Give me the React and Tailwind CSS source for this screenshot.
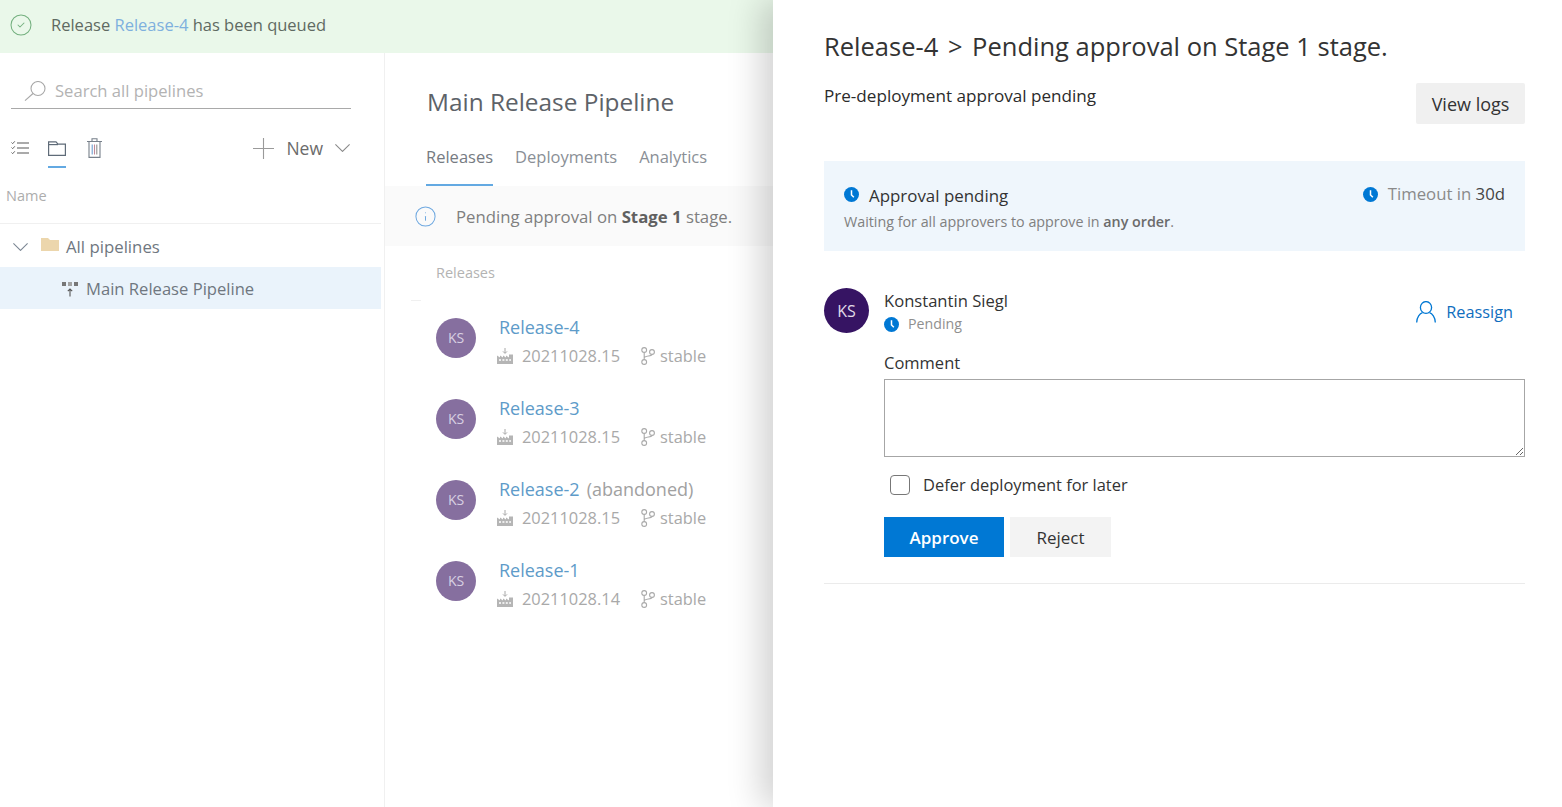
import { CircleCheck, Info } from "lucide-react";

const releases = [
  { name: "Release-4", build: "20211028.15" },
  { name: "Release-3", build: "20211028.15" },
  { name: "Release-2", build: "20211028.15", note: "(abandoned)" },
  { name: "Release-1", build: "20211028.14" },
];

const ClockIcon = ({ className }) => (
  <svg viewBox="0 0 16 16" className={className}>
    <circle cx="8" cy="8" r="8" fill="#0078d4" />
    <path d="M8 3.5V8.5L10.5 11" fill="none" stroke="#fff" strokeWidth="1.6" />
  </svg>
);

const Chevron = ({ color }) => (
  <svg viewBox="0 0 15 8" className="w-[15px] h-[8px] shrink-0" fill="none" stroke={color} strokeWidth="1.1">
    <path d="M0.4 0.4L7.5 7.4L14.6 0.4" />
  </svg>
);

const SearchIcon = () => (
  <svg viewBox="0 0 22 20" className="w-[22px] h-[20px] shrink-0" fill="none" stroke="#a8a8a8" strokeWidth="1.1">
    <circle cx="14" cy="7.5" r="7" />
    <path d="M9 12.5L1 19.6" />
  </svg>
);

const PlusIcon = () => (
  <svg viewBox="0 0 21 21" className="w-[21px] h-[21px] shrink-0" stroke="#9a9a9a" strokeWidth="1.1">
    <path d="M0 10.5H21M10.5 0V21" />
  </svg>
);

const ListIcon = () => (
  <svg viewBox="0 0 18 14" className="w-[18px] h-[14px]" fill="none" stroke="#8f8f8f">
    <path d="M6 2H18M6 7H18M6 12H18" strokeWidth="1.3" />
    <path d="M0.5 1.5L1.7 2.7L3.8 0.3M0.5 6.5L1.7 7.7L3.8 5.3M0.5 11.5L1.7 12.7L3.8 10.3" strokeWidth="1" stroke="#666" />
  </svg>
);

const FolderIcon = () => (
  <svg viewBox="0 0 18 15" className="w-[18px] h-[15px]" fill="none" stroke="#5f6b78" strokeWidth="1.2">
    <path d="M0.6 14.4V0.9H8L10 3.2H17.4V14.4Z" />
    <path d="M0.6 3.6H10" />
  </svg>
);

const TrashIcon = () => (
  <svg viewBox="0 0 15 20" className="w-[15px] h-[20px]" fill="none" stroke="#77808a" strokeWidth="1.1">
    <path d="M0 3.5H15M2 3.5V19.4H13V3.5M5 3.5V0.8H10V3.5" />
    <path d="M5.2 6.5V16.5" stroke="#6f9fd0" />
    <path d="M7.5 6.5V16.5" stroke="#c08a9a" />
    <path d="M9.8 6.5V16.5" stroke="#8f8f8f" />
  </svg>
);

const PipelineIcon = () => (
  <svg viewBox="0 0 16 15" className="w-4 h-[15px]">
    <rect x="0" y="0" width="4" height="4" fill="#777" />
    <rect x="6" y="0" width="4" height="4" fill="#a3a3a3" />
    <rect x="12" y="0" width="4" height="4" fill="#777" />
    <path d="M8 14.5V7M5.8 9.2L8 7L10.2 9.2" fill="none" stroke="#555" strokeWidth="1.1" />
  </svg>
);

const BuildIcon = () => (
  <svg viewBox="0 0 16 16" className="w-4 h-4 shrink-0 -ml-[2px]">
    <path d="M8 0V5M6 3.4L8 5.4L10 3.4" fill="none" stroke="#a8a8a8" strokeWidth="1" />
    <path d="M0 16V7.5L3 9.5V7.5L6 9.5V7.5L9 9.5V7.5L12 9.5V6.5H16V16Z" fill="#b5b5b5" />
    <path d="M2 12H14" stroke="#fff" strokeWidth="1.4" strokeDasharray="2 1.4" />
  </svg>
);

const BranchIcon = () => (
  <svg viewBox="0 0 14 18" className="w-[14px] h-[18px] shrink-0" fill="none" stroke="#a9a9a9" strokeWidth="1.1">
    <circle cx="3.2" cy="3" r="2.4" />
    <circle cx="3.2" cy="15" r="2.4" />
    <circle cx="11" cy="5" r="2.4" />
    <path d="M3.2 5.4V12.6M3.2 11C3.2 8.5 11 9.5 11 7.4" />
  </svg>
);

const UserIcon = () => (
  <svg viewBox="0 0 20 22" className="w-[20px] h-[22px] shrink-0" fill="none" stroke="#0078d4" strokeWidth="1.3">
    <ellipse cx="10" cy="6.5" rx="5.6" ry="5.9" />
    <path d="M0.7 21.5C0.7 16 4 12.5 6.5 11.6M19.3 21.5C19.3 16 16 12.5 13.5 11.6" />
  </svg>
);

const Avatar = () => (
  <div className="w-10 h-10 pb-[2px] rounded-full bg-[#866f9f] flex items-center justify-center text-[#d8cfe2] text-[14px] font-medium shrink-0">
    KS
  </div>
);

const ReleaseRow = ({ release }) => (
  <div className="flex gap-[23px] h-[81px]">
    <Avatar />
    <div className="-mt-[4px]">
      <div className="h-[28px] pb-[2px] flex items-center text-[18px] font-medium text-[#5e9bc9]">
        {release.name}
        {release.note && <span className="ml-[7px] font-normal text-[#a1a1a1]">{release.note}</span>}
      </div>
      <div className="h-[28px] flex items-center text-[16.4px] text-[#a9a9a9]">
        <BuildIcon />
        <span className="ml-[9px] w-[119px]">{release.build}</span>
        <BranchIcon />
        <span className="ml-[5px]">stable</span>
      </div>
    </div>
  </div>
);

const Sidebar = () => (
  <aside className="w-[385px] shrink-0 border-r border-[#f0f0f0] flex flex-col">
    <div className="mt-[21px] mx-[11px] w-[340px] h-[35px] border-b border-[#a9a9a9] flex items-center pl-[13px] text-[16.6px] text-[#b3b3b3]">
      <SearchIcon />
      <span className="ml-[9px]">Search all pipelines</span>
    </div>
    <div className="mt-[23px] h-[36px] flex pl-[11px] pr-[34px]">
      <div className="flex items-center pb-[4px]">
        <ListIcon />
      </div>
      <div className="ml-[19px] w-[18px] border-b-2 border-[#63a9e2] flex items-center pb-[2px]">
        <FolderIcon />
      </div>
      <div className="ml-[21px] flex items-center pb-[4px]">
        <TrashIcon />
      </div>
      <div className="ml-auto flex items-center pb-[4px] text-[#6b6b6b] text-[17.5px] font-medium">
        <PlusIcon />
        <span className="ml-[12px]">New</span>
        <span className="ml-[12px]">
          <Chevron color="#8a8a8a" />
        </span>
      </div>
    </div>
    <div className="h-[56px] border-b border-[#f0f0f0] flex items-center pl-[6px] mr-[3px] text-[14.5px] text-[#adadad]">
      Name
    </div>
    <div className="h-[43px] flex items-center pl-[13px] pt-[2px] text-[16.8px] text-[#6f7780]">
      <Chevron color="#7c8794" />
      <svg viewBox="0 0 18 13" className="ml-[13px] -mt-[5px] w-[18px] h-[13px]">
        <path d="M0 13V0H7L9 2H18V13Z" fill="#ecd6ac" />
      </svg>
      <span className="ml-[7px]">All pipelines</span>
    </div>
    <div className="h-[42px] w-[381px] bg-[#eaf3fb] flex items-center pl-[62px] pt-[2px] text-[16.6px] text-[#6f7780]">
      <PipelineIcon />
      <span className="ml-[8px]">Main Release Pipeline</span>
    </div>
  </aside>
);

const ReleaseList = () => (
  <main className="flex-1 min-w-0 flex flex-col">
    <h1 className="pt-[31px] pl-[42px] h-[86px] text-[24.4px] leading-[36px] font-medium text-[#5d6268] whitespace-nowrap">
      Main Release Pipeline
    </h1>
    <div className="pl-[41px] h-[47px] flex gap-[22px] text-[16.5px] text-[#8a8f96]">
      <div className="h-full border-b-2 border-[#63a9e2] flex items-center pb-[8px] font-medium text-[#767b82]">
        Releases
      </div>
      <div className="h-full flex items-center pb-[10px]">Deployments</div>
      <div className="h-full flex items-center pb-[10px]">Analytics</div>
    </div>
    <div className="h-[60px] bg-[#fafafa] flex items-center pl-[29px] text-[16.75px] text-[#7f7f7f] whitespace-nowrap">
      <Info className="w-[23px] h-[23px] text-[#6ea8e0]" strokeWidth={1.05} />
      <span className="ml-[19px] pt-[2px]">
        Pending approval on <b className="font-bold text-[#606060]">Stage 1</b> stage.
      </span>
    </div>
    <div className="pl-[51px] h-[54px] flex items-center text-[14.5px] text-[#b3b3b3]">Releases</div>
    <div className="ml-[26px] w-[10px] border-t border-[#f0f0f0]" />
    <div className="pl-[51px] pt-[17px]">
      {releases.map((release) => (
        <ReleaseRow key={release.name} release={release} />
      ))}
    </div>
  </main>
);

const ApprovalPanel = () => (
  <section className="relative z-10 flex-1 min-w-0 bg-white pl-[51px] pr-[37px] pt-[31px] shadow-[-12px_0_32px_rgba(0,0,0,0.18)] text-[#2f2f2f]">
    <h2 className="h-[32px] text-[25.5px] leading-[30px] font-medium text-[#333] whitespace-nowrap">
      Release-4 <span className="mx-[3px]">&gt;</span> Pending approval on Stage 1 stage.
    </h2>
    <div className="mt-[20px] flex justify-between items-start">
      <div className="h-[25px] flex items-center text-[17.1px] font-medium text-[#2b2b2b]">Pre-deployment approval pending</div>
      <button className="w-[109px] h-[41px] pt-[2px] rounded-[2px] bg-[#f0f0f0] text-[18px] font-medium text-[#333]">View logs</button>
    </div>
    <div className="mt-[37px] h-[90px] bg-[#eff6fc] px-[20px] pt-[20px] flex justify-between">
      <div>
        <div className="h-[28px] pt-[1px] flex items-center text-[16.9px] text-[#333]">
          <ClockIcon className="w-[15px] h-[15px] -mt-[3px]" />
          <span className="ml-[10px]">Approval pending</span>
        </div>
        <div className="h-[24px] pt-[2px] flex items-center text-[14.3px] text-[#808080]">
          <span>
            Waiting for all approvers to approve in <b className="font-semibold text-[#6b6b6b]">any order</b>.
          </span>
        </div>
      </div>
      <div className="h-[26px] flex items-center text-[16.75px] text-[#8a8a8a]">
        <ClockIcon className="w-[15px] h-[15px]" />
        <span className="ml-[10px]">
          Timeout in <span className="text-[#444]">30d</span>
        </span>
      </div>
    </div>
    <div className="mt-[37px] flex">
      <div className="w-[45px] h-[45px] rounded-full bg-[#361463] flex items-center justify-center text-[#e0dbe8] text-[16px] shrink-0">
        KS
      </div>
      <div className="ml-[15px] flex-1">
        <div className="flex justify-between">
          <div>
            <div className="h-[26px] flex items-center text-[16.6px] text-[#333]">Konstantin Siegl</div>
            <div className="h-[20px] flex items-center text-[14.2px] text-[#8f8f8f]">
              <ClockIcon className="w-[15px] h-[15px]" />
              <span className="ml-[9px]">Pending</span>
            </div>
          </div>
          <div className="mt-[10px] mr-[12px] h-[28px] flex items-center text-[16.3px] text-[#106ebe]">
            <UserIcon />
            <span className="ml-[10px]">Reassign</span>
          </div>
        </div>
        <div className="mt-[16px] mb-[3px] h-[26px] flex items-center text-[16.5px] text-[#333]">Comment</div>
        <textarea className="block w-full h-[78px] border border-[#a6a6a6] bg-white" />
        <div className="mt-[15px] h-[26px] flex items-center pl-[6px] text-[16.45px] text-[#333]">
          <div className="w-[20px] h-[20px] rounded-[4px] border border-[#777]" />
          <span className="ml-[13px]">Defer deployment for later</span>
        </div>
        <div className="mt-[19px] flex gap-[6px]">
          <button className="w-[120px] h-[40px] pt-[2px] bg-[#0078d4] text-white text-[17px] font-semibold">Approve</button>
          <button className="w-[101px] h-[40px] pt-[2px] bg-[#f3f3f3] text-[#333] text-[17px] font-medium">Reject</button>
        </div>
      </div>
    </div>
    <div className="mt-[26px] border-t border-[#ebebeb]" />
  </section>
);

const App = () => {
  return (
    <div className="h-screen flex overflow-hidden bg-white font-['Open_Sans',sans-serif]">
      <div className="w-[773px] shrink-0 flex flex-col">
        <div className="h-[53px] shrink-0 bg-[#eaf8ea] flex items-center pl-[9px] pb-[3px] text-[16.5px] text-[#5f6a62]">
          <CircleCheck className="w-[24px] h-[24px] text-[#74b07f]" strokeWidth={1.05} />
          <span className="ml-[18px]">
            Release <span className="text-[#7eb0de]">Release-4</span> has been queued
          </span>
        </div>
        <div className="flex-1 flex min-h-0">
          <Sidebar />
          <ReleaseList />
        </div>
      </div>
      <ApprovalPanel />
    </div>
  );
};

export default App;
